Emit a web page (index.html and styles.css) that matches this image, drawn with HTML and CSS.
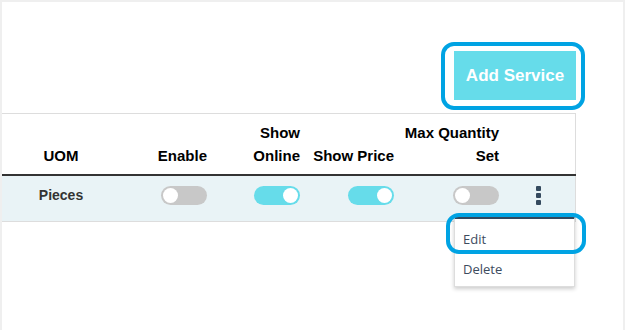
FILE: index.html
```html
<!DOCTYPE html>
<html lang="en">
<head>
    <meta charset="UTF-8">
    <meta name="viewport" content="width=device-width, initial-scale=1.0">
    <title>Services</title>
    <link rel="stylesheet" href="styles.css">
</head>
<body>

<div class="page">
    <div class="toolbar">
        <button class="add-btn">Add Service</button>
    </div>

    <table class="services">
        <colgroup>
            <col class="c-uom">
            <col class="c-enable">
            <col class="c-online">
            <col class="c-price">
            <col class="c-max">
            <col class="c-action">
        </colgroup>
        <thead>
            <tr>
                <th class="center">UOM</th>
                <th>Enable</th>
                <th>Show<br>Online</th>
                <th>Show Price</th>
                <th>Max Quantity<br>Set</th>
                <th></th>
            </tr>
        </thead>
        <tbody>
            <tr>
                <td class="center uom">Pieces</td>
                <td><span class="toggle"></span></td>
                <td><span class="toggle on"></span></td>
                <td><span class="toggle on"></span></td>
                <td><span class="toggle"></span></td>
                <td class="action">
                    <span class="kebab"><i></i><i></i><i></i></span>
                </td>
            </tr>
        </tbody>
    </table>

    <div class="menu">
        <div class="menu-item">Edit</div>
        <div class="menu-item">Delete</div>
    </div>

    <div class="ring ring-add"></div>
    <div class="ring ring-edit"></div>
</div>

</body>
</html>
```

FILE: styles.css
```css
* {
    box-sizing: border-box;
}
body {
    margin: 0;
    background: #fff;
    font-family: "Liberation Sans", Arial, sans-serif;
}
.page {
    position: relative;
    width: 625px;
    height: 330px;
    border: 2px solid #efefef;
    border-bottom: none;
}
.toolbar {
    width: 574px;
    display: flex;
    justify-content: flex-end;
    padding: 49px 0 13px;
}
.add-btn {
    width: 122px;
    height: 49px;
    border: none;
    background: #66dcea;
    color: #fff;
    font-family: "Liberation Sans", Arial, sans-serif;
    font-weight: bold;
    font-size: 17px;
    padding: 0;
    cursor: pointer;
}
.services {
    width: 573px;
    table-layout: fixed;
    border-collapse: collapse;
    border-top: 1px solid #dddddd;
    border-right: 1px solid #dddddd;
}
.c-uom { width: 118px; }
.c-enable { width: 95px; }
.c-online { width: 93px; }
.c-price { width: 94px; }
.c-max { width: 105px; }
.c-action { width: 68px; }
.services th {
    height: 61px;
    vertical-align: bottom;
    text-align: right;
    padding: 0 8px 7px 0;
    font-size: 15px;
    line-height: 23px;
    font-weight: bold;
    color: #000;
    border-bottom: 2px solid #333;
}
.services td {
    height: 47px;
    background: #e9f3f6;
    text-align: right;
    vertical-align: middle;
    padding: 0 8px 6px 0;
    border-bottom: 1px solid #dddddd;
}
.services .center {
    text-align: center;
    padding-right: 0;
}
.uom {
    font-size: 14px;
    font-weight: bold;
    color: #333;
}
.toggle {
    display: inline-block;
    vertical-align: middle;
    position: relative;
    width: 46px;
    height: 19px;
    border-radius: 10px;
    background: #c8c8c8;
}
.toggle::after {
    content: "";
    position: absolute;
    top: 2px;
    left: 2px;
    width: 15px;
    height: 15px;
    border-radius: 50%;
    background: #fff;
}
.toggle.on {
    background: #66dcea;
}
.toggle.on::after {
    left: 29px;
}
.services .action {
    text-align: left;
    padding-left: 29px;
}
.kebab {
    display: inline-flex;
    flex-direction: column;
    gap: 2px;
    vertical-align: middle;
}
.kebab i {
    display: block;
    width: 5px;
    height: 5px;
    border-radius: 1px;
    background: #34495e;
}
.menu {
    position: absolute;
    left: 452px;
    top: 214px;
    width: 121px;
    background: #fff;
    border: 1px solid #dddddd;
    border-top: 3px solid #34495e;
    padding: 5px 0 2px;
    box-shadow: 0 2px 4px rgba(0, 0, 0, 0.2);
}
.menu-item {
    height: 30px;
    line-height: 30px;
    padding: 0 8px;
    font-family: "Open Sans", sans-serif;
    font-size: 13px;
    color: #3c4b5e;
}
.ring {
    position: absolute;
    border: 4px solid #00a3e3;
    border-radius: 13px;
}
.ring-add {
    left: 439px;
    top: 40px;
    width: 144px;
    height: 68px;
}
.ring-edit {
    left: 444px;
    top: 211px;
    width: 140px;
    height: 41px;
}
```
